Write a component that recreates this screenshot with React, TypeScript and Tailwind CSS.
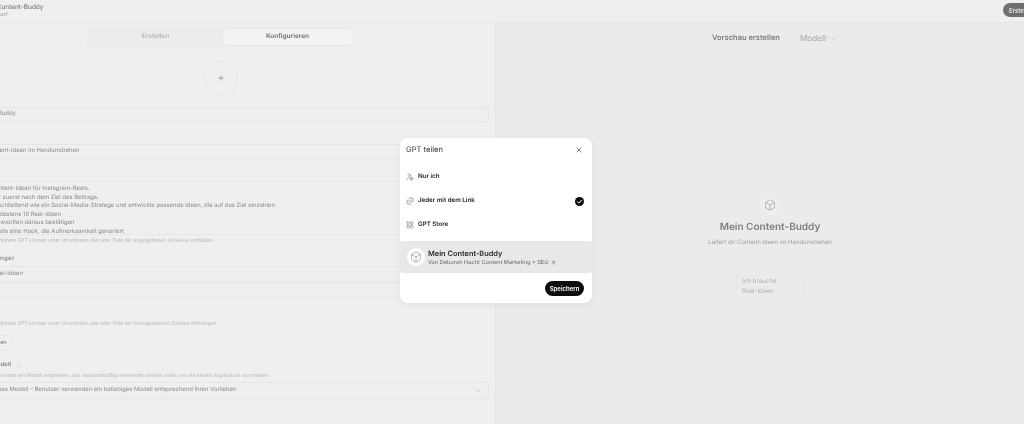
import { Box, ChevronDown, LayoutGrid, Plus, UserLock, UserRound, X } from 'lucide-react';

const font = { fontFamily: 'Inter, "Liberation Sans", sans-serif' };

const instructions = [
    'Du erstellst Content-Ideen für Instagram-Reels.',
    'Frage den User zuerst nach dem Ziel des Beitrags.',
    'Denke bitte anschließend wie ein Social-Media-Stratege und entwickle passende Ideen, die auf das Ziel einzahlen',
    'Formuliere mindestens 10 Reel-Ideen',
    'Lasse dir drei Favoriten daraus bestätigen',
    'Formuliere jeweils eine Hook, die Aufmerksamkeit generiert',
];

const Field = ({ value, className = '' }: { value: string; className?: string }) => (
    <div className={`h-[15px] rounded-[4px] border border-[#e6e6e6] px-[5px] flex items-center text-[5.9px] text-[#8a8a8a] whitespace-nowrap ${className}`}>
        {value}
    </div>
);

const Label = ({ children, className = '' }: { children: string; className?: string }) => (
    <div className={`text-[6px] leading-[8px] font-semibold text-[#8a8a8a] whitespace-nowrap ${className}`}>{children}</div>
);

const Hint = ({ children, className = '' }: { children: string; className?: string }) => (
    <div className={`text-[5px] leading-[7px] text-[#b8b8b8] whitespace-nowrap ${className}`}>{children}</div>
);

const ShareRow = ({ icon, label, checked }: { icon: React.ReactNode; label: string; checked?: boolean }) => (
    <div className="h-[24px] px-[6px] flex items-center text-[#222]">
        <span className="w-[12px] flex justify-start text-[#666]">{icon}</span>
        <span className="text-[6.2px] font-semibold">{label}</span>
        {checked && (
            <svg className="ml-auto mr-[2px]" width="9" height="9" viewBox="0 0 18 18">
                <circle cx="9" cy="9" r="9" fill="#0d0d0d" />
                <path d="M5 9.5l2.8 2.8L13 6.5" fill="none" stroke="#fff" strokeWidth="2" strokeLinecap="round" strokeLinejoin="round" />
            </svg>
        )}
    </div>
);

const App = () => {
    return (
        <div className="relative w-[1024px] h-[424px] overflow-hidden bg-[#efefef] antialiased [text-rendering:geometricPrecision]" style={font}>
            <div className="-ml-[48px] w-[1092px] h-full flex flex-col blur-[0.5px]">
                <header className="h-[23px] shrink-0 border-b border-[#e6e6e6] flex items-center pl-[28px] pr-[6px]">
                    <div>
                        <div className="text-[6.4px] leading-[9px] font-medium text-[#7a7a7a] whitespace-nowrap">Mein Content-Buddy</div>
                        <div className="text-[5.4px] leading-[7px] text-[#a0a0a0] whitespace-nowrap">Im Entwurf</div>
                    </div>
                    <button className="ml-auto mb-[2px] h-[14px] w-[35px] rounded-full bg-[#6f6f6f] text-[6px] font-semibold text-[#e8e8e8] text-left pl-[6px]">
                        Erstellen
                    </button>
                </header>

                <div className="flex-1 flex min-h-0">
                    <section className="w-[544px] shrink-0 pr-[6px] border-r border-[#e6e6e6]">
                        <div className="mx-auto mt-[4px] w-[268px] h-[20px] rounded-[5px] bg-[#ececec] flex items-center p-[2px] text-[6.5px] font-semibold">
                            <div className="w-[134px] text-center text-[#b5b5b5]">Erstellen</div>
                            <div className="flex-1 h-full rounded-[4px] bg-[#f3f3f3] shadow-[0_0_2px_rgba(0,0,0,0.05)] flex items-center justify-center text-[#6f6f6f]">
                                Konfigurieren
                            </div>
                        </div>

                        <div className="mx-auto mt-[14px] w-[34px] h-[34px] rounded-full border border-[#e6e6e6] flex items-center justify-center text-[#8a8a8a]">
                            <Plus size={8} />
                        </div>

                        <Label className="mt-[4px]">Name</Label>
                        <Field value="Mein Content-Buddy" />

                        <Label className="mt-[14px]">Beschreibung</Label>
                        <Field value="Liefert dir Content-Ideen im Handumdrehen" />

                        <Label className="mt-[14px]">Hinweise</Label>
                        <div className="h-[54px] overflow-hidden rounded-[4px] border border-[#e6e6e6] px-[5px] pt-[3px] text-[5.9px] leading-[8.6px] text-[#8a8a8a] whitespace-nowrap">
                            {instructions.map((line) => (
                                <div key={line}>{line}</div>
                            ))}
                        </div>
                        <Hint className="mt-[3px]">Unterhaltungen mit deinem GPT können unter Umständen alle oder Teile der angegebenen Hinweise enthalten.</Hint>

                        <Label className="mt-[10px] tracking-[0.3px]">Gesprächsanfänger</Label>
                        <Field value="Ich brauche Reel-Ideen" className="mt-[3px] h-[16px]" />
                        <Field value="" className="mt-px" />

                        <Label className="mt-[13px]">Wissen</Label>
                        <Hint className="mt-[2px]">Unterhaltungen mit deinem GPT können unter Umständen alle oder Teile der hochgeladenen Dateien offenlegen.</Hint>

                        <div className="mt-[7px] w-fit h-[16px] rounded-full border border-[#e6e6e6] px-[5px] flex items-center text-[5.4px] font-semibold text-[#8a8a8a] whitespace-nowrap">
                            Dateien hochladen
                        </div>

                        <div className="mt-[10px] flex items-center gap-[5px] text-[6px] leading-[8px] font-semibold text-[#8a8a8a] whitespace-nowrap">
                            Empfohlenes Modell
                            <span className="w-[6px] h-[6px] rounded-full border border-[#e0e0e0]" />
                        </div>
                        <Hint className="mt-[4px]">Du kannst für den Benutzer ein Modell empfehlen, das standardmäßig verwendet werden sollte, um die besten Ergebnisse zu erhalten.</Hint>

                        <div className="mt-[2px] h-[17px] rounded-[4px] border border-[#e6e6e6] pl-[5px] pr-[6px] flex items-center text-[5.9px] text-[#8a8a8a] whitespace-nowrap">
                            Kein empfohlenes Modell – Benutzer verwenden ein beliebiges Modell entsprechend ihren Vorlieben
                            <ChevronDown size={7} className="ml-auto text-[#b0b0b0]" />
                        </div>

                        <Label className="mt-[22px]">Fähigkeiten</Label>
                    </section>

                    <section className="flex-1 bg-[#ebebeb] flex flex-col items-center">
                        <div className="w-full h-[30px] flex items-center pl-[216px] text-[#8f8f8f]">
                            <span className="text-[7.5px] font-semibold text-[#7d7d7d] whitespace-nowrap">Vorschau erstellen</span>
                            <span className="ml-[20px] text-[8.2px] text-[#a5a5a5]">Modell</span>
                            <span className="ml-[1px] text-[4px] text-[#c0c0c0]">s</span>
                            <ChevronDown size={7} className="ml-[1px] text-[#b0b0b0]" />
                        </div>

                        <div className="mt-[142px] w-[20px] h-[20px] rounded-full bg-[#eeeeee] flex items-center justify-center text-[#a0a0a0]">
                            <Box size={12} strokeWidth={1.4} />
                        </div>
                        <div className="mt-[5px] text-[10px] leading-[14px] font-semibold text-[#7d7d7d]">Mein Content-Buddy</div>
                        <div className="mt-[5px] text-[6px] leading-[8px] text-[#a0a0a0]">Liefert dir Content-Ideen im Handumdrehen</div>
                        <div className="mt-[24px] w-[68px] h-[31px] rounded-[7px] border border-[#e6e6e6] px-[5px] flex items-center text-[6.2px] leading-[9.5px] text-[#b0b0b0]">
                            Ich brauche
                            <br />
                            Reel-Ideen
                        </div>
                    </section>
                </div>
            </div>

            <div className="absolute left-[400px] top-[138px] w-[192px] h-[165px] rounded-[8px] bg-white shadow-[0_2px_8px_rgba(0,0,0,0.06)] flex flex-col blur-[0.3px] [will-change:transform]">
                <div className="h-[23px] px-[6px] flex items-center justify-between text-[#333]">
                    <span className="text-[7.6px] leading-[10px] text-[#333]">GPT teilen</span>
                    <X size={8} className="mr-[3px] text-[#444]" />
                </div>
                <div className="mt-[4px]">
                    <ShareRow icon={<UserLock size={8} strokeWidth={1.4} />} label="Nur ich" />
                    <ShareRow
                        icon={
                            <svg width="8" height="8" viewBox="0 0 24 24" fill="none" stroke="currentColor" strokeWidth="1.8" strokeLinecap="round" strokeLinejoin="round">
                                <path d="M10 3h8a3 3 0 0 1 3 3v6a3 3 0 0 1-3 3h-2" />
                                <path d="M14 21H6a3 3 0 0 1-3-3v-6a3 3 0 0 1 3-3h2" />
                                <path d="M9 15l6-6" />
                            </svg>
                        }
                        label="Jeder mit dem Link"
                        checked
                    />
                    <ShareRow icon={<LayoutGrid size={8} strokeWidth={1.4} />} label="GPT Store" />
                </div>
                <div className="mt-[4px] h-[32px] rounded-[3px] bg-[#e8e8e8] px-[7px] flex items-center gap-[3px]">
                    <div className="w-[18px] h-[18px] rounded-full bg-white flex items-center justify-center text-[#888]">
                        <Box size={12} strokeWidth={1.2} />
                    </div>
                    <div className="pt-px">
                        <div className="text-[7.4px] leading-[10px] font-semibold text-[#2a2a2a]">Mein Content-Buddy</div>
                        <div className="flex items-center gap-[3px] text-[5.6px] leading-[8px] text-[#666]">
                            Von Deborah Hucht Content Marketing + SEO
                            <UserRound size={5} />
                        </div>
                    </div>
                </div>
                <button className="mt-[8px] mr-[8px] self-end w-[39px] h-[15px] rounded-full bg-[#0d0d0d] text-[6px] font-semibold text-white">
                    Speichern
                </button>
            </div>
        </div>
    );
};

export default App;
